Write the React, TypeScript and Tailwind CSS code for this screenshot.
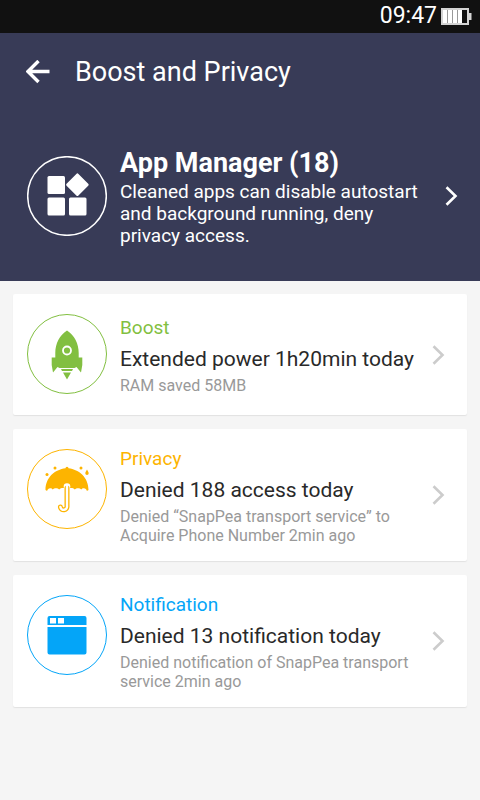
import React from "react";

function BatteryIcon() {
  return (
    <svg width="31" height="17" viewBox="0 0 31 17" aria-hidden="true">
      <path d="M1 1h26v15H1z" fill="none" stroke="#d4d4d4" strokeWidth="2" />
      <path d="M28 5h2.5v7H28z" fill="#d4d4d4" />
      <path d="M2 2h4v13H2zM7 2h4v13H7zM12 2h4v13h-4zM17 2h4v13h-4z" fill="#fff" />
      <path d="M6 2h1v13H6zM11 2h1v13h-1zM16 2h1v13h-1z" fill="#999" />
    </svg>
  );
}

function BackIcon() {
  return (
    <svg width="24" height="24" viewBox="0 0 24 24" fill="none" stroke="currentColor" strokeWidth="3.4" aria-hidden="true">
      <path d="M12.500 1 2 11.500 12.500 22M2.500 11.500H23.500" />
    </svg>
  );
}

function Chevron() {
  return (
    <svg className="shrink-0" width="13" height="20" viewBox="0 0 13 20" fill="none" stroke="currentColor" strokeWidth="2.6" aria-hidden="true">
      <path d="M1.5 1.2 10.5 10l-9 8.8" />
    </svg>
  );
}

function AppsIcon() {
  return (
    <svg width="80" height="80" viewBox="0 0 80 80" fill="currentColor" aria-hidden="true">
      <circle cx="40" cy="40" r="39.3" fill="none" stroke="currentColor" strokeWidth="1.5" />
      <rect x="20.500" y="20" width="17.500" height="18" rx="1.5" />
      <rect x="20.500" y="41.500" width="17.500" height="18" rx="1.5" />
      <rect x="42" y="41.500" width="17.500" height="18" rx="1.5" />
      <rect x="42" y="20.300" width="16.800" height="16.800" rx="1.5" transform="rotate(45 50.400 28.700)" />
    </svg>
  );
}

function RocketIcon() {
  return (
    <svg width="80" height="80" viewBox="0 0 80 80" fill="currentColor" aria-hidden="true">
      <circle cx="40" cy="40" r="39.5" fill="none" stroke="currentColor" />
      <path d="M40 16.500c7.500 5 11.700 13 11.700 22.500v4.500h3.600V51l-1.300 7.500-4.500-5.500-2 1h-15l-2-1-4.500 5.500-1.300-7.500v-7.500h3.600V39c0-9.500 4.200-17.500 11.700-22.500z" />
      <path d="M34 55h12l-1 2H35zM36 58.500h8L40 65.500z" />
      <circle cx="40" cy="36.500" r="4" fill="none" stroke="#fff" strokeWidth="1.800" />
    </svg>
  );
}

function UmbrellaIcon() {
  return (
    <svg width="80" height="80" viewBox="0 0 80 80" fill="currentColor" aria-hidden="true">
      <circle cx="40" cy="40" r="39.5" fill="none" stroke="currentColor" />
      <path d="M18.500 41C18.500 28.500 28 20.500 38.500 19.300a1.500 1.500 0 0 1 3 0C52 20.500 61.500 28.500 61.500 41c-1.500 1.500-2 .5-2.200-.5-1.500-1.800-4-1.800-5 0-1.500-1.800-5-1.800-6.500 0-1.500-1.500-3-1.800-4.500-1.500h-6.600c-1.500-.3-3 0-4.500 1.500-1.500-1.800-5-1.800-6.500 0-1-1.800-3.500-1.800-5 0-.2 1-.7 2-2.200.5z" />
      <circle cx="40" cy="37.500" r="3.300" fill="#fff" />
      <path d="M40 39v18a3.300 3.300 0 0 1-6.600 1" fill="none" stroke="currentColor" strokeWidth="5" strokeLinecap="round" />
      <path d="M40 37v20a3.300 3.300 0 0 1-6.600 1" fill="none" stroke="#fff" strokeWidth="2.400" strokeLinecap="round" />
      <circle cx="20" cy="25.500" r="1.500" />
      <circle cx="28" cy="19" r="1.500" />
      <circle cx="54" cy="19" r="1.500" />
      <path d="M60 20.500c1 2 1.700 2.500 1.700 3.700a1.700 1.700 0 0 1-3.400 0c0-1.200.7-1.700 1.700-3.700z" />
    </svg>
  );
}

function WindowIcon() {
  return (
    <svg width="80" height="80" viewBox="0 0 80 80" fill="currentColor" aria-hidden="true">
      <circle cx="40" cy="40" r="39.5" fill="none" stroke="currentColor" />
      <path d="M20.500 30v-7a2 2 0 0 1 2-2h35a2 2 0 0 1 2 2v7zM20.500 32h39v25.500a2 2 0 0 1-2 2h-35a2 2 0 0 1-2-2z" />
      <path d="M23 23h6v5.500h-6zM31 23h6v5.500h-6z" fill="#fff" />
    </svg>
  );
}

const cards = [
  {
    label: "Boost",
    color: "text-[#82bf41]",
    title: "Extended power 1h20min today",
    detail: "RAM saved 58MB",
    icon: <RocketIcon />,
  },
  {
    label: "Privacy",
    color: "text-[#fdb400]",
    title: "Denied 188 access today",
    detail: "Denied “SnapPea transport service” to Acquire Phone Number 2min ago",
    icon: <UmbrellaIcon />,
  },
  {
    label: "Notification",
    color: "text-[#04a5f8]",
    title: "Denied 13 notification today",
    detail: "Denied notification of SnapPea transport service 2min ago",
    icon: <WindowIcon />,
  },
];

export default function App() {
  return (
    <div className="min-h-screen bg-[#f5f5f5] font-['Roboto',sans-serif]">
      <div className="flex h-[33px] items-center justify-end gap-1 bg-[#111111] pr-2 text-[23px] text-white">
        <span>09:47</span>
        <BatteryIcon />
      </div>

      <header className="bg-[#383b57] text-white">
        <div className="flex h-[78px] items-center gap-[25px] pl-[26px]">
          <button type="button" aria-label="Back">
            <BackIcon />
          </button>
          <h1 className="text-[27px]">Boost and Privacy</h1>
        </div>
        <a href="#apps" className="flex items-center py-[34px] pr-[22px] pl-[27px]">
          <span className="shrink-0">
            <AppsIcon />
          </span>
          <span className="ml-[13px] min-w-0 flex-1">
            <span className="block text-[27px] leading-9 font-bold">App Manager (18)</span>
            <span className="block max-w-[310px] text-[19px] leading-[22px]">
              Cleaned apps can disable autostart and background running, deny privacy access.
            </span>
          </span>
          <Chevron />
        </a>
      </header>

      <main className="flex flex-col gap-[14px] p-[13px]">
        {cards.map((card) => (
          <a
            key={card.label}
            href={`#${card.label.toLowerCase()}`}
            className="flex min-h-[121px] items-center rounded-xs bg-white pr-[22px] pl-[14px] shadow-[0_1px_1px_#e2e2e2]"
          >
            <span className={`mt-5 shrink-0 self-start ${card.color}`}>{card.icon}</span>
            <span className="ml-[13px] flex min-w-0 flex-1 flex-col pt-5 pb-4">
              <span className={`text-[19px] leading-5 ${card.color}`}>{card.label}</span>
              <span className="mt-1 text-[21px] leading-[34px] whitespace-nowrap text-[#292929]">{card.title}</span>
              <span className="max-w-[300px] text-[16px] leading-[19px] text-[#999999]">{card.detail}</span>
            </span>
            <span className="text-[#cccccc]">
              <Chevron />
            </span>
          </a>
        ))}
      </main>
    </div>
  );
}
